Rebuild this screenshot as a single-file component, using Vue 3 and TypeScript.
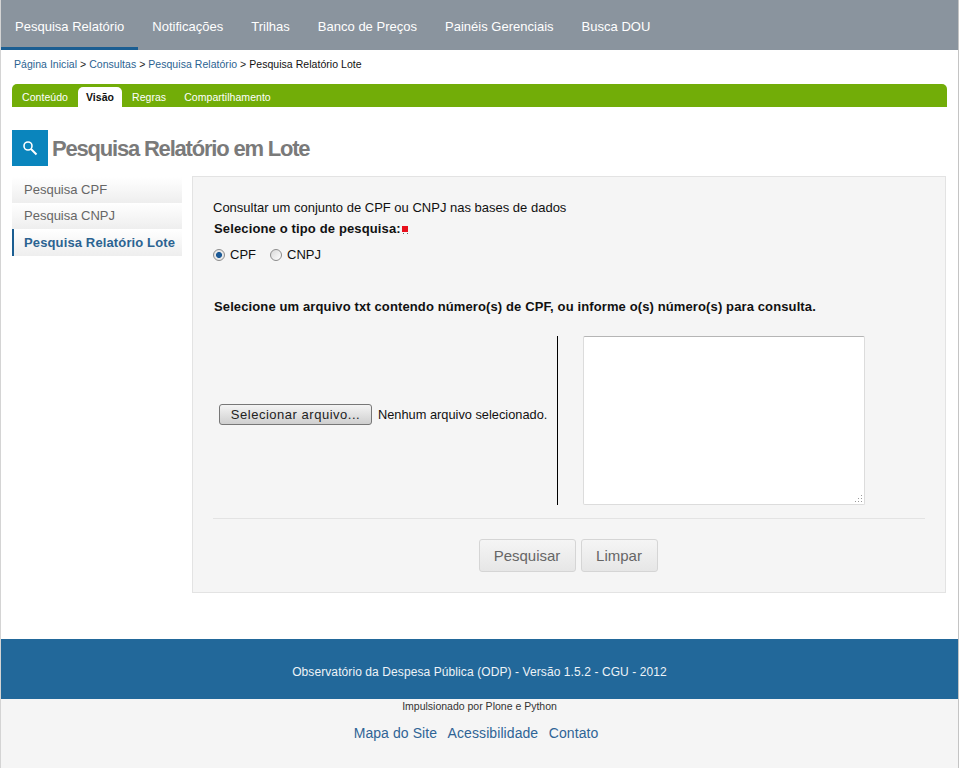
<template>
  <div class="page">
    <nav class="topnav">
      <a
        v-for="(item, i) in navItems"
        :key="item"
        class="navlink"
        :class="{ active: i === 0 }"
        href="#"
      >{{ item }}</a>
    </nav>

    <div class="breadcrumb">
      <a href="#">Página Inicial</a> &gt; <a href="#">Consultas</a> &gt;
      <a href="#">Pesquisa Relatório</a> &gt; <span>Pesquisa Relatório Lote</span>
    </div>

    <div class="tabs">
      <a
        v-for="tab in tabs"
        :key="tab"
        class="tab"
        :class="{ selected: tab === 'Visão' }"
        href="#"
      >{{ tab }}</a>
    </div>

    <header class="title">
      <span class="title-icon">
        <svg width="16" height="16" viewBox="0 0 16 16" fill="none" stroke="#fff">
          <circle cx="6" cy="6" r="4" stroke-width="1.6" />
          <path d="M9 9l5.5 5.5" stroke-width="2" />
        </svg>
      </span>
      <h1>Pesquisa Relatório em Lote</h1>
    </header>

    <div class="columns">
      <ul class="sidemenu">
        <li v-for="item in sideItems" :key="item" :class="{ current: item === 'Pesquisa Relatório Lote' }">
          {{ item }}
        </li>
      </ul>

      <form class="panel" @submit.prevent>
        <p class="intro">Consultar um conjunto de CPF ou CNPJ nas bases de dados</p>
        <p class="label">Selecione o tipo de pesquisa:<span class="required"></span></p>
        <div class="radios">
          <label><input v-model="tipo" type="radio" value="CPF" />CPF</label>
          <label><input v-model="tipo" type="radio" value="CNPJ" />CNPJ</label>
        </div>
        <p class="instructions">
          Selecione um arquivo txt contendo número(s) de {{ tipo }}, ou informe o(s) número(s) para consulta.
        </p>
        <div class="inputs">
          <div class="file-side">
            <button class="file-btn" type="button">Selecionar arquivo...</button>
            <span class="file-name">Nenhum arquivo selecionado.</span>
          </div>
          <div class="text-side">
            <textarea></textarea>
            <svg class="grip" width="8" height="8" viewBox="0 0 8 8" fill="#9a9a9a">
              <rect x="6" y="0" width="1" height="1" />
              <rect x="6" y="3" width="1" height="1" />
              <rect x="3" y="3" width="1" height="1" />
              <rect x="6" y="6" width="1" height="1" />
              <rect x="3" y="6" width="1" height="1" />
              <rect x="0" y="6" width="1" height="1" />
            </svg>
          </div>
        </div>
        <div class="actions">
          <button class="btn search" type="submit">Pesquisar</button>
          <button class="btn clear" type="reset">Limpar</button>
        </div>
      </form>
    </div>

    <footer>
      <div class="footer-bar">Observatório da Despesa Pública (ODP) - Versão 1.5.2 - CGU - 2012</div>
      <div class="footer-rest">
        <div class="powered">Impulsionado por Plone e Python</div>
        <div class="footer-links">
          <a href="#">Mapa do Site</a>
          <a href="#">Acessibilidade</a>
          <a href="#">Contato</a>
        </div>
      </div>
    </footer>
  </div>
</template>

<script setup lang="ts">
import { ref } from 'vue';

const navItems = ['Pesquisa Relatório', 'Notificações', 'Trilhas', 'Banco de Preços', 'Painéis Gerenciais', 'Busca DOU'];
const tabs = ['Conteúdo', 'Visão', 'Regras', 'Compartilhamento'];
const sideItems = ['Pesquisa CPF', 'Pesquisa CNPJ', 'Pesquisa Relatório Lote'];

const tipo = ref('CPF');
</script>

<style>
html, body {
  margin: 0;
  background: #fff;
}
</style>

<style scoped>
.page {
  height: 768px;
  overflow: hidden;
  box-sizing: border-box;
  border-left: 1px solid #d4d4d4;
  border-right: 1px solid #c4c4c4;
  font-family: "Liberation Sans", Arial, sans-serif;
  display: flex;
  flex-direction: column;
}
a {
  text-decoration: none;
}
p {
  margin: 0;
}

.topnav {
  display: flex;
  flex: none;
  height: 50px;
  background: #8a949e;
}
.navlink {
  padding: 0 14px;
  line-height: 53px;
  font-size: 13px;
  letter-spacing: 0.01px;
  color: #fff;
  box-sizing: border-box;
}
.navlink.active {
  border-bottom: 3px solid #1b5e92;
}

.breadcrumb {
  flex: none;
  padding: 8px 0 0 13px;
  height: 26px;
  box-sizing: border-box;
  font-size: 10.5px;
  letter-spacing: 0.04px;
  line-height: 13px;
  color: #222;
}
.breadcrumb a {
  color: #2b6391;
}
.breadcrumb span {
  color: #111;
}

.tabs {
  display: flex;
  flex: none;
  align-items: flex-end;
  gap: 2px;
  height: 23px;
  margin: 8px 11px 0 11px;
  padding-left: 2px;
  background: #72ad08;
  border-radius: 5px 5px 0 0;
}
.tab {
  padding: 0 8px;
  height: 20px;
  line-height: 21px;
  font-size: 10.5px;
  letter-spacing: 0.05px;
  color: #fff;
}
.tab.selected {
  background: #fff;
  color: #111;
  font-weight: bold;
  border-radius: 5px 5px 0 0;
}

.title {
  display: flex;
  flex: none;
  align-items: center;
  gap: 4px;
  margin: 23px 0 0 11px;
  height: 36px;
}
.title-icon {
  width: 36px;
  height: 36px;
  background: #0a85bd;
  display: flex;
  align-items: center;
  justify-content: center;
}
.title h1 {
  margin: 2px 0 0;
  font-size: 22px;
  font-weight: bold;
  letter-spacing: -1.2px;
  color: #7a7a7a;
}

.columns {
  display: flex;
  flex: none;
  margin: 10px 12px 0 11px;
  gap: 10px;
}
.sidemenu {
  list-style: none;
  margin: 1px 0 0;
  padding: 0;
  width: 170px;
  flex: none;
}
.sidemenu li {
  height: 26px;
  line-height: 25px;
  padding-left: 12px;
  font-size: 13px;
  color: #666;
  background: linear-gradient(#fff, #eee);
  white-space: nowrap;
}
.sidemenu li.current {
  box-sizing: border-box;
  height: 27px;
  line-height: 27px;
  border-left: 2px solid #1b5e92;
  padding-left: 10px;
  font-weight: bold;
  letter-spacing: 0.13px;
  color: #2b6391;
}

.panel {
  flex: 1;
  height: 417px;
  box-sizing: border-box;
  padding: 23px 20px 0 20px;
  background: #f5f5f5;
  border: 1px solid #e3e3e3;
  font-size: 13px;
  color: #111;
}
.intro {
  line-height: 15px;
}
.label {
  margin: 6px 0 0 1px;
  font-size: 13px;
  letter-spacing: 0.14px;
  line-height: 15px;
  font-weight: bold;
}
.required {
  display: inline-block;
  width: 6px;
  height: 6px;
  margin-left: 1px;
  vertical-align: 1px;
  background: #e8101c;
  box-shadow: -1.5px 4.5px 0 -2.5px #666, 2.5px 4.5px 0 -2.5px #666;
}
.radios {
  display: flex;
  gap: 14px;
  margin-top: 11px;
  font-size: 13px;
  line-height: 16px;
}
.radios label {
  display: flex;
  align-items: center;
}
.radios input {
  appearance: none;
  box-sizing: border-box;
  margin: 0 5px 0 0;
  width: 12px;
  height: 12px;
  border: 1px solid #8c8c8c;
  border-radius: 50%;
  background: linear-gradient(135deg, #d8d8d8, #fff);
}
.radios input:checked {
  background: radial-gradient(circle, #1c5a96 0 2.6px, #e8e8e8 3.4px);
}
.instructions {
  margin: 36px 0 0 1px;
  font-size: 13px;
  letter-spacing: 0.12px;
  line-height: 15px;
  font-weight: bold;
  white-space: nowrap;
}
.inputs {
  display: flex;
  margin-top: 22px;
  height: 169px;
}
.file-side {
  width: 345px;
  box-sizing: border-box;
  padding: 0 0 12px 6px;
  border-right: 1px solid #000;
  display: flex;
  align-items: center;
  gap: 6px;
}
.file-btn {
  width: 153px;
  height: 21px;
  padding: 0;
  font: 13px "Liberation Sans", Arial, sans-serif;
  letter-spacing: 0.52px;
  color: #222;
  border: 1px solid #777;
  border-radius: 3px;
  background: linear-gradient(#f4f4f4, #cfcfcf);
}
.file-name {
  font-size: 12.8px;
  white-space: nowrap;
}
.text-side {
  margin-left: 25px;
  position: relative;
}
.text-side textarea {
  display: block;
  width: 282px;
  height: 169px;
  box-sizing: border-box;
  background: #fff;
  border: 1px solid #dcdcdc;
  border-top-color: #b5b5b5;
  border-radius: 2px;
  outline: none;
  resize: none;
}
.grip {
  position: absolute;
  right: 2px;
  bottom: 2px;
}
.actions {
  margin-top: 13px;
  padding: 20px 2px 0 0;
  border-top: 1px solid #e3e3e3;
  display: flex;
  justify-content: center;
  gap: 5px;
}
.btn {
  height: 33px;
  padding: 0;
  font: 15px "Liberation Sans", Arial, sans-serif;
  color: #666;
  border: 1px solid #d5d5d5;
  border-radius: 3px;
  background: linear-gradient(#f5f5f5, #e6e6e6);
}
.btn.search {
  width: 97px;
}
.btn.clear {
  width: 77px;
}

footer {
  margin-top: 46px;
  flex: 1;
  display: flex;
  flex-direction: column;
}
.footer-bar {
  height: 60px;
  line-height: 66px;
  text-align: center;
  font-size: 12px;
  letter-spacing: 0.09px;
  color: #eef3f7;
  background: #22689a;
}
.footer-rest {
  flex: 1;
  background: #f5f5f5;
  text-align: center;
}
.powered {
  margin-top: 1px;
  font-size: 10.5px;
  line-height: 13px;
  color: #333;
}
.footer-links {
  margin-top: 11px;
  padding-right: 7px;
  display: flex;
  justify-content: center;
  gap: 10.5px;
  font-size: 14px;
  letter-spacing: 0.08px;
  line-height: 18px;
}
.footer-links a {
  color: #2f6496;
}
</style>
